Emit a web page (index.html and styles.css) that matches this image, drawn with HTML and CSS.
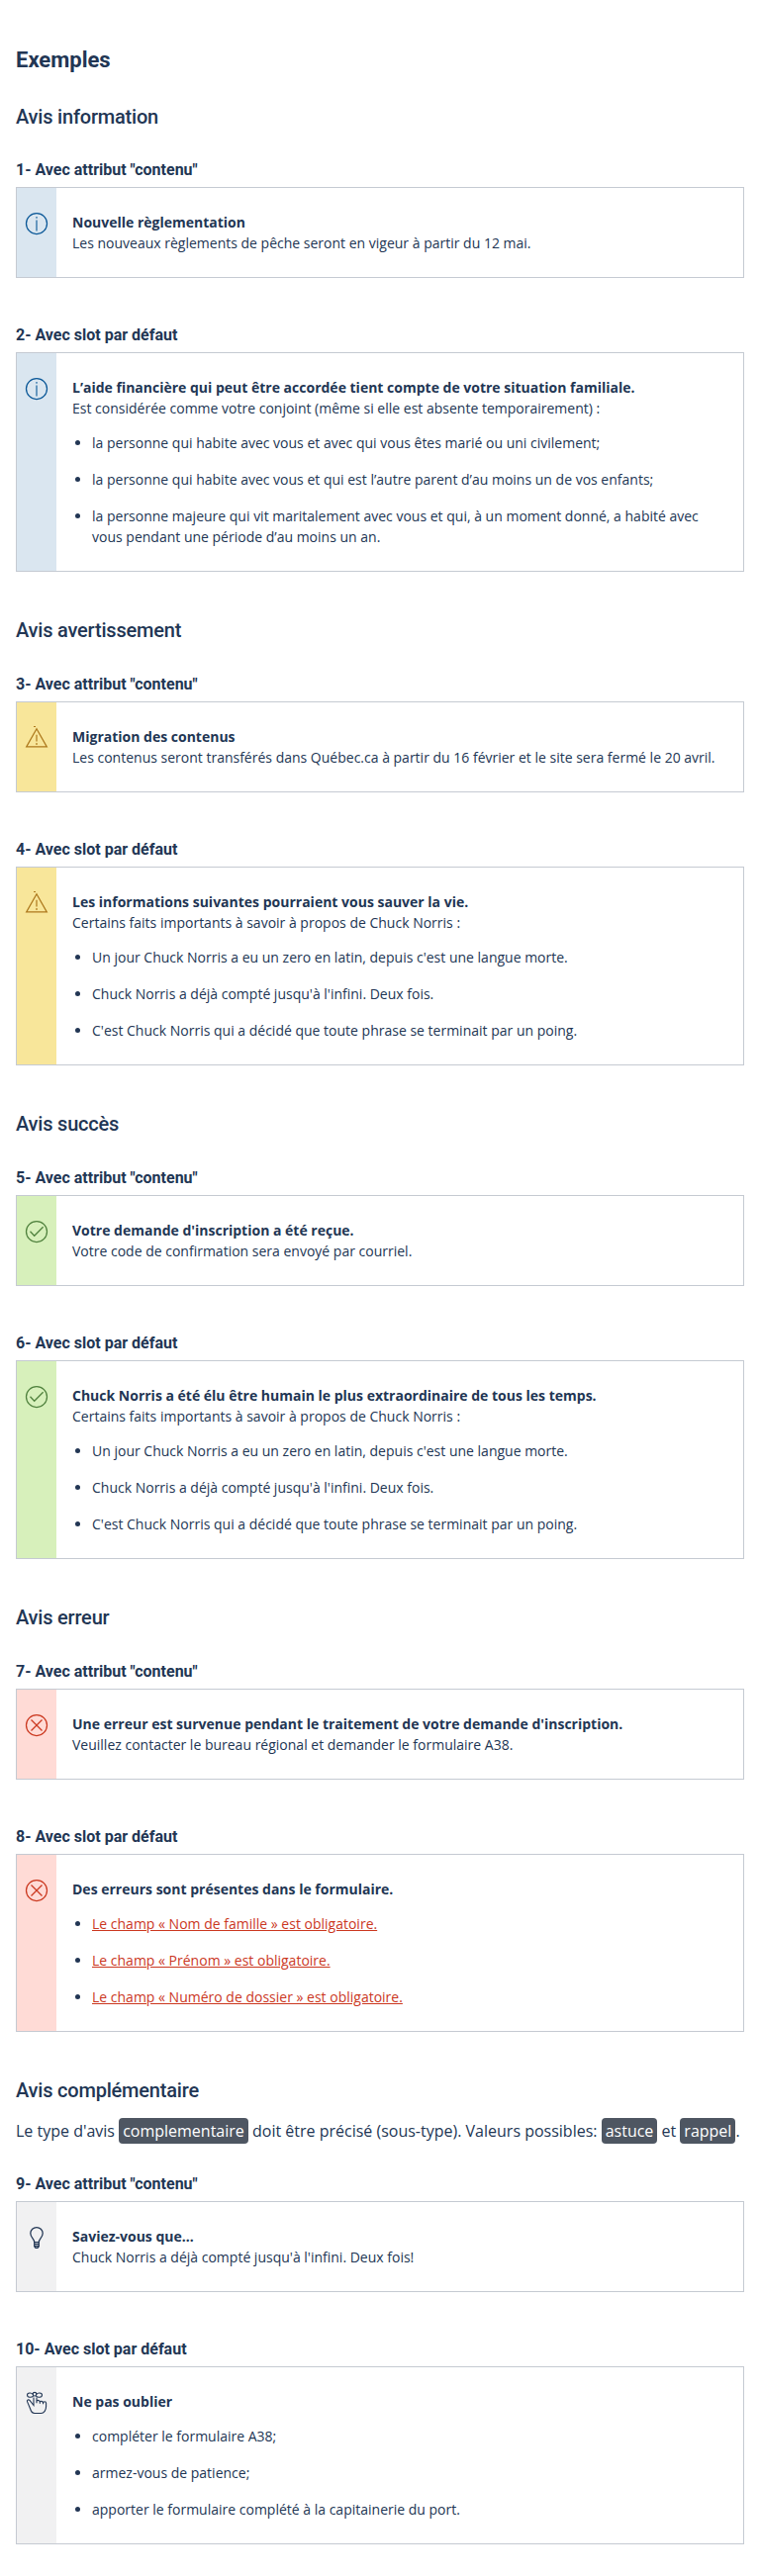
FILE: index.html
```html
<!DOCTYPE html>
<html lang="fr">
<head>
<meta charset="utf-8">
<title>Exemples</title>
<link rel="stylesheet" href="styles.css">
</head>
<body>
<svg class="sprite" aria-hidden="true">
  <symbol id="i-info" viewBox="0 0 24 24"><circle cx="12" cy="12" r="10.500"/><path stroke-width="1.100" d="M12 8.500v11M12 5v1.800"/></symbol>
  <symbol id="i-warn" viewBox="0 0 24 24"><path d="M12 2.800 22.300 20.900H1.700Z"/><path stroke-width="1.200" d="M12 8.800v6.700M12 17v2M9 .5h2"/></symbol>
  <symbol id="i-ok" viewBox="0 0 24 24"><circle cx="12" cy="12" r="10.500"/><path d="m5.500 11.800 4.200 4.500L18.600 7.200"/></symbol>
  <symbol id="i-err" viewBox="0 0 24 24"><circle cx="12" cy="12" r="10.500"/><path d="m6.500 6.500 11 11M17.500 6.500l-11 11"/></symbol>
  <symbol id="i-bulb" viewBox="0 0 24 24"><path d="M9.700 16.500c0-3.300-3.900-4.700-3.900-9A6.200 6.200 0 0 1 12 1.500a6.200 6.200 0 0 1 6.200 6c0 4.300-3.900 5.700-3.900 9Z"/><path d="M9.700 16.500v4.300l1.300 1.600h2l1.300-1.600v-4.300M9.700 18.500h4.600M9.700 20.500h4.600"/></symbol>
  <symbol id="i-hand" viewBox="0 0 24 24"><path stroke-width="1.100" d="M9 6.500v8L5 9.400c-1.200-1.100-3-.2-2.500 1.200L5.600 18c.7 2.700 2 4.500 4.400 4.500h6.500c3.100 0 5.100-3.400 5.100-7v-3.300c0-1.900-2.900-1.900-3 0v1M18.600 12.200c0-2.200-3.200-2.500-3.300-.8v1.400M15.300 11.400c0-2.200-2.500-2.400-3.300-1.300M12 12.200V6.500"/><path stroke-width="1.100" d="M8.600 3.700C6.800 1.400 2.500 1.500 2.500 4.100s4.300 3 6.300.7M11.400 3.700c1.800-2.300 6.100-2.200 6.100.4s-4.300 3-6.300.7"/><circle stroke-width="1.100" cx="10" cy="3.200" r="1.800"/></symbol>
</svg>
<main class="page">
  <h2 class="title">Exemples</h2>

  <h3 class="type">Avis information</h3>
  <h4 class="example">1- Avec attribut "contenu"</h4>
  <section class="notice notice--info">
    <div class="notice__side"><svg class="icon"><use href="#i-info"/></svg></div>
    <div class="notice__body">
      <p class="notice__title">Nouvelle règlementation</p>
      <p>Les nouveaux règlements de pêche seront en vigeur à partir du 12 mai.</p>
    </div>
  </section>
  <h4 class="example">2- Avec slot par défaut</h4>
  <section class="notice notice--info">
    <div class="notice__side"><svg class="icon"><use href="#i-info"/></svg></div>
    <div class="notice__body">
      <p class="notice__title">L’aide financière qui peut être accordée tient compte de votre situation familiale.</p>
      <p>Est considérée comme votre conjoint (même si elle est absente temporairement) :</p>
      <ul class="list">
        <li>la personne qui habite avec vous et avec qui vous êtes marié ou uni civilement;</li>
        <li>la personne qui habite avec vous et qui est l’autre parent d’au moins un de vos enfants;</li>
        <li>la personne majeure qui vit maritalement avec vous et qui, à un moment donné, a habité avec vous pendant une période d’au moins un an.</li>
      </ul>
    </div>
  </section>

  <h3 class="type">Avis avertissement</h3>
  <h4 class="example">3- Avec attribut "contenu"</h4>
  <section class="notice notice--warn">
    <div class="notice__side"><svg class="icon"><use href="#i-warn"/></svg></div>
    <div class="notice__body">
      <p class="notice__title">Migration des contenus</p>
      <p>Les contenus seront transférés dans Québec.ca à partir du 16 février et le site sera fermé le 20 avril.</p>
    </div>
  </section>
  <h4 class="example">4- Avec slot par défaut</h4>
  <section class="notice notice--warn">
    <div class="notice__side"><svg class="icon"><use href="#i-warn"/></svg></div>
    <div class="notice__body">
      <p class="notice__title">Les informations suivantes pourraient vous sauver la vie.</p>
      <p>Certains faits importants à savoir à propos de Chuck Norris :</p>
      <ul class="list">
        <li>Un jour Chuck Norris a eu un zero en latin, depuis c'est une langue morte.</li>
        <li>Chuck Norris a déjà compté jusqu'à l'infini. Deux fois.</li>
        <li>C'est Chuck Norris qui a décidé que toute phrase se terminait par un poing.</li>
      </ul>
    </div>
  </section>

  <h3 class="type">Avis succès</h3>
  <h4 class="example">5- Avec attribut "contenu"</h4>
  <section class="notice notice--ok">
    <div class="notice__side"><svg class="icon"><use href="#i-ok"/></svg></div>
    <div class="notice__body">
      <p class="notice__title">Votre demande d'inscription a été reçue.</p>
      <p>Votre code de confirmation sera envoyé par courriel.</p>
    </div>
  </section>
  <h4 class="example">6- Avec slot par défaut</h4>
  <section class="notice notice--ok">
    <div class="notice__side"><svg class="icon"><use href="#i-ok"/></svg></div>
    <div class="notice__body">
      <p class="notice__title">Chuck Norris a été élu être humain le plus extraordinaire de tous les temps.</p>
      <p>Certains faits importants à savoir à propos de Chuck Norris :</p>
      <ul class="list">
        <li>Un jour Chuck Norris a eu un zero en latin, depuis c'est une langue morte.</li>
        <li>Chuck Norris a déjà compté jusqu'à l'infini. Deux fois.</li>
        <li>C'est Chuck Norris qui a décidé que toute phrase se terminait par un poing.</li>
      </ul>
    </div>
  </section>

  <h3 class="type">Avis erreur</h3>
  <h4 class="example">7- Avec attribut "contenu"</h4>
  <section class="notice notice--err">
    <div class="notice__side"><svg class="icon"><use href="#i-err"/></svg></div>
    <div class="notice__body">
      <p class="notice__title">Une erreur est survenue pendant le traitement de votre demande d'inscription.</p>
      <p>Veuillez contacter le bureau régional et demander le formulaire A38.</p>
    </div>
  </section>
  <h4 class="example">8- Avec slot par défaut</h4>
  <section class="notice notice--err">
    <div class="notice__side"><svg class="icon"><use href="#i-err"/></svg></div>
    <div class="notice__body">
      <p class="notice__title">Des erreurs sont présentes dans le formulaire.</p>
      <ul class="list">
        <li><a href="#">Le champ « Nom de famille » est obligatoire.</a></li>
        <li><a href="#">Le champ « Prénom » est obligatoire.</a></li>
        <li><a href="#">Le champ « Numéro de dossier » est obligatoire.</a></li>
      </ul>
    </div>
  </section>

  <h3 class="type">Avis complémentaire</h3>
  <p class="intro">Le type d'avis <code>complementaire</code> doit être précisé (sous-type). Valeurs possibles: <code>astuce</code> et <code>rappel</code>.</p>
  <h4 class="example">9- Avec attribut "contenu"</h4>
  <section class="notice notice--more">
    <div class="notice__side"><svg class="icon"><use href="#i-bulb"/></svg></div>
    <div class="notice__body">
      <p class="notice__title">Saviez-vous que...</p>
      <p>Chuck Norris a déjà compté jusqu'à l'infini. Deux fois!</p>
    </div>
  </section>
  <h4 class="example">10- Avec slot par défaut</h4>
  <section class="notice notice--more">
    <div class="notice__side"><svg class="icon"><use href="#i-hand"/></svg></div>
    <div class="notice__body">
      <p class="notice__title">Ne pas oublier</p>
      <ul class="list">
        <li>compléter le formulaire A38;</li>
        <li>armez-vous de patience;</li>
        <li>apporter le formulaire complété à la capitainerie du port.</li>
      </ul>
    </div>
  </section>
</main>
</body>
</html>
```
FILE: styles.css
```css
* { box-sizing: border-box; }

body {
  margin: 0;
  background: #fff;
  color: #223654;
  font: 16px/24px "Open Sans", sans-serif;
}

p { margin: 0; }

.sprite { display: none; }

.page { padding: 47px 16px 32px; }

.title,
.type,
.example { font-family: Roboto, sans-serif; }

.title {
  margin: 0;
  font-size: 22px;
  line-height: 28px;
  font-weight: 700;
}

.type {
  margin: 47px 0 0;
  font-size: 20px;
  line-height: 24px;
  font-weight: 500;
  letter-spacing: -0.2px;
}

.title + .type { margin-top: 31px; }

.example {
  margin: 48px 0 7px;
  font-size: 16px;
  line-height: 20px;
  font-weight: 700;
}

.type + .example { margin-top: 33px; }

.title + .type + .example,
.intro + .example { margin-top: 32px; }

.intro { margin-top: 17px; }

.intro code {
  padding: 2px 4px;
  border-radius: 4px;
  background: #4e5662;
  color: #fff;
  font: inherit;
}

.notice {
  display: flex;
  border: 1px solid #c5cad2;
  font-size: 14px;
  line-height: 21px;
}

.notice__side {
  flex: 0 0 40px;
  padding: 24px 8px;
}

.notice__body {
  flex: 1;
  padding: 24px 16px;
}

.notice__title { font-weight: 700; }

.notice--info .notice__side { background: #dae6f0; color: #095797; }
.notice--warn .notice__side { background: #f8e69a; color: #ad781c; }
.notice--ok .notice__side { background: #d7f0bb; color: #4f813d; }
.notice--err .notice__side { background: #ffdbd6; color: #cb381f; }
.notice--more .notice__side { background: #f1f1f2; color: #223654; }

.icon {
  display: block;
  width: 24px;
  height: 24px;
  fill: none;
  stroke: currentColor;
  stroke-width: 1.25;
}

.list {
  margin: 14px 0 0;
  padding: 0 0 0 20px;
}

.list li + li { margin-top: 16px; }

.list a { color: #cb381f; }
```
